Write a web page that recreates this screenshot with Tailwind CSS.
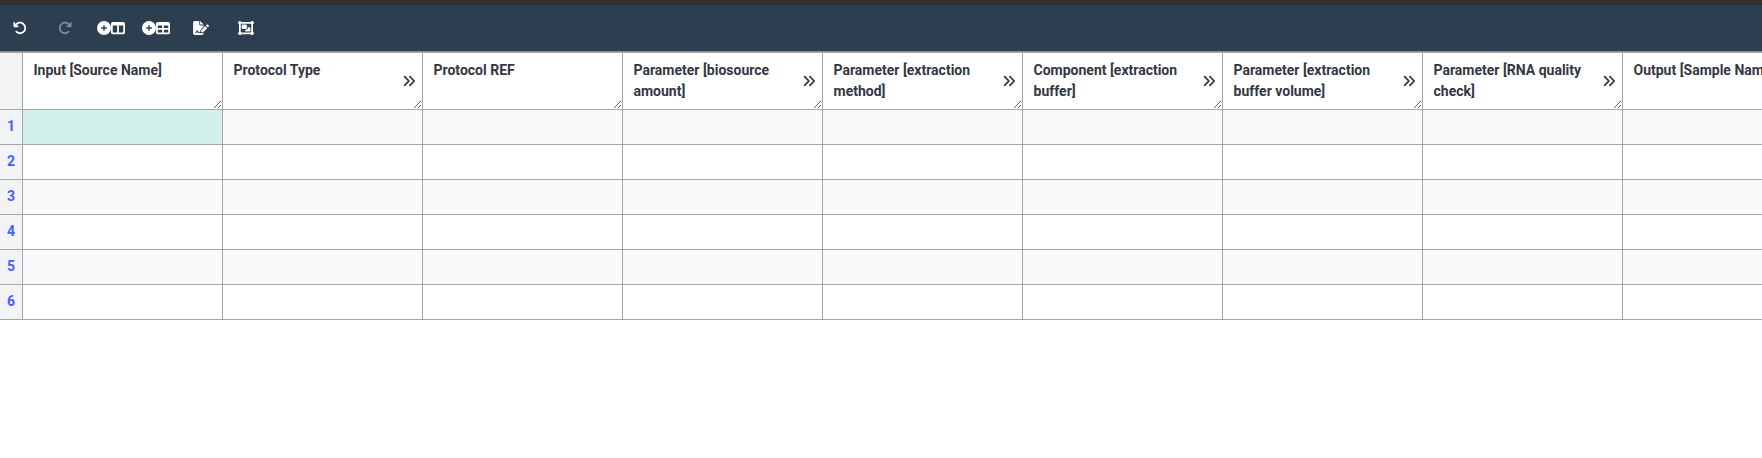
<!DOCTYPE html>
<html lang="en">
<head>
<meta charset="utf-8">
<title>Annotation table</title>
<script src="https://cdn.jsdelivr.net/npm/@tailwindcss/browser@4"></script>
</head>
<body class="h-screen overflow-hidden bg-white font-['Roboto',sans-serif] text-sm text-[#333742]">
<svg class="hidden">
  <symbol id="undo" viewBox="0 0 512 512"><path d="M125.7 160H176c17.7 0 32 14.3 32 32s-14.3 32-32 32H48c-17.7 0-32-14.3-32-32V64c0-17.7 14.3-32 32-32s32 14.3 32 32v51.2L97.6 97.6c87.5-87.5 229.3-87.5 316.8 0s87.5 229.3 0 316.8s-229.3 87.5-316.8 0c-12.5-12.5-12.5-32.8 0-45.3s32.8-12.5 45.3 0c62.5 62.5 163.8 62.5 226.3 0s62.5-163.8 0-226.3s-163.8-62.5-226.3 0L125.7 160z"/></symbol>
  <symbol id="plus" viewBox="0 0 512 512"><path d="M256 512A256 256 0 1 0 256 0a256 256 0 1 0 0 512zM232 344V280H168c-13.3 0-24-10.7-24-24s10.7-24 24-24h64V168c0-13.3 10.7-24 24-24s24 10.7 24 24v64h64c13.3 0 24 10.7 24 24s-10.7 24-24 24H280v64c0 13.3-10.7 24-24 24s-24-10.7-24-24z"/></symbol>
  <symbol id="columns" viewBox="0 0 512 512"><path d="M0 96C0 60.7 28.7 32 64 32H448c35.3 0 64 28.7 64 64V416c0 35.3-28.7 64-64 64H64c-35.3 0-64-28.7-64-64V96zm64 64V416H224V160H64zm384 0H288V416H448V160z"/></symbol>
  <symbol id="table" viewBox="0 0 512 512"><path d="M64 256V160H224v96H64zm0 64H224v96H64V320zm224 96V320H448v96H288zM448 256H288V160H448v96zM64 32C28.7 32 0 60.7 0 96V416c0 35.3 28.7 64 64 64H448c35.3 0 64-28.7 64-64V96c0-35.3-28.7-64-64-64H64z"/></symbol>
  <symbol id="sign" viewBox="0 0 576 512"><path d="M64 0C28.7 0 0 28.7 0 64V448c0 35.3 28.7 64 64 64H320c35.3 0 64-28.7 64-64V428.7c-2.7 1.1-5.4 2-8.2 2.7l-60.1 15c-3 .7-6 1.2-9 1.4c-.9 .1-1.8 .2-2.7 .2H240c-6.1 0-11.6-3.4-14.3-8.8l-8.8-17.7c-1.7-3.4-5.1-5.5-8.8-5.5s-7.2 2.1-8.8 5.5l-8.8 17.7c-2.9 5.9-9.2 9.4-15.7 8.8s-12.1-5.1-13.9-11.3L144 381l-9.8 32.8c-6.1 20.3-24.8 34.2-46 34.2H80c-8.8 0-16-7.2-16-16s7.2-16 16-16h8.2c7.1 0 13.3-4.6 15.3-11.4l14.9-49.5c3.4-11.3 13.8-19.1 25.6-19.1s22.2 7.7 25.6 19.1l11.6 38.6c7.4-6.2 16.8-9.7 26.8-9.7c15.9 0 30.4 9 37.5 23.2l4.4 8.8h8.9c-3.1-8.8-3.7-18.4-1.4-27.8l15-60.1c2.8-11.3 8.6-21.5 16.8-29.7L384 203.6V160H256c-17.7 0-32-14.3-32-32V0H64zM256 0V128H384L256 0zM549.8 139.7c-15.6-15.6-40.9-15.6-56.6 0l-29.4 29.4 71 71 29.4-29.4c15.6-15.6 15.6-40.9 0-56.6l-14.4-14.4zM311.9 321c-4.1 4.1-7 9.2-8.4 14.9l-15 60.1c-1.4 5.5 .2 11.2 4.2 15.2s9.7 5.6 15.2 4.2l60.1-15c5.6-1.4 10.8-4.3 14.9-8.4L512.1 262.7l-71-71L311.9 321z"/></symbol>
  <symbol id="group" viewBox="0 0 576 512"><path fill-rule="evenodd" d="M32 119.4V392.6c-19 11-32 31.700-32 55.400 0 35.300 28.700 64 64 64 23.700 0 44.400-12.900 55.400-32H456.600c11.100 19.100 31.700 32 55.400 32 35.300 0 64-28.700 64-64 0-23.700-12.900-44.400-32-55.400V119.400c19.100-11.100 32-31.700 32-55.400 0-35.300-28.700-64-64-64-23.700 0-44.400 12.900-55.400 32H119.400C108.400 12.900 87.700 0 64 0 28.700 0 0 28.700 0 64c0 23.700 13 44.400 32 55.400zM119.400 96H456.600c5.600 9.700 13.700 17.800 23.400 23.400V392.600c-9.700 5.600-17.800 13.700-23.400 23.400H119.400c-5.600-9.700-13.700-17.800-23.400-23.400V119.400c9.700-5.600 17.800-13.700 23.400-23.400z"/><path d="M128 160c0-17.700 14.300-32 32-32H288c17.700 0 32 14.300 32 32v96c0 17.700-14.300 32-32 32H160c-17.700 0-32-14.300-32-32V160zM256 320h32c35.300 0 64-28.700 64-64V224h64c17.700 0 32 14.300 32 32v96c0 17.700-14.300 32-32 32H288c-17.700 0-32-14.300-32-32V320z"/></symbol>
  <symbol id="chevs" viewBox="0 0 512 512"><path d="M470.600 278.600c12.500-12.500 12.500-32.800 0-45.300l-160-160c-12.500-12.500-32.800-12.500-45.300 0s-12.500 32.800 0 45.300L402.700 256 265.400 393.400c-12.500 12.500-12.500 32.800 0 45.300s32.800 12.500 45.300 0l160-160zm-352 160l160-160c12.500-12.500 12.500-32.800 0-45.300l-160-160c-12.500-12.500-32.800-12.500-45.300 0s-12.500 32.800 0 45.300L210.700 256 73.400 393.400c-12.500 12.500-12.500 32.800 0 45.300s32.800 12.500 45.300 0z"/></symbol>
</svg>
<div class="h-[5px] bg-[#303030]"></div>
<nav class="flex h-[46px] items-center bg-[#2d3e50] pl-[13px] pb-[1px] text-white fill-current">
  <svg class="size-3.5"><use href="#undo"/></svg>
  <svg class="ml-[31px] size-3.5 -scale-x-100 opacity-40"><use href="#undo"/></svg>
  <span class="ml-[24.5px] flex"><svg class="size-3.5"><use href="#plus"/></svg><svg class="size-3.5"><use href="#columns"/></svg></span>
  <span class="ml-[17px] flex"><svg class="size-3.5"><use href="#plus"/></svg><svg class="size-3.5"><use href="#table"/></svg></span>
  <svg class="ml-[23px] h-3.5 w-4"><use href="#sign"/></svg>
  <svg class="ml-[29px] h-3.5 w-4"><use href="#group"/></svg>
</nav>
<div class="h-px bg-[#8f8c91]"></div>
<main id="grid" class="grid w-[1823px] grid-cols-[23px_repeat(9,200px)]"></main>
<script>
  const headers = [
    ['Input [Source Name]', 0], ['Protocol Type', 1], ['Protocol REF', 0],
    ['Parameter [biosource amount]', 1], ['Parameter [extraction method]', 1],
    ['Component [extraction buffer]', 1], ['Parameter [extraction buffer volume]', 1],
    ['Parameter [RNA quality check]', 1], ['Output [Sample Name]', 0]
  ];
  const line = 'border-r border-b border-[#a6a6a6] ';
  let html = `<div class="${line} border-t h-[58px] bg-[#f2f3f5]"></div>`;
  for (const [name, more] of headers) {
    html += `<div class="${line} border-t h-[58px]"><div class="flex h-full resize-x items-center overflow-hidden pl-[10.5px] pr-1.5">
      <div class="h-[42px] flex-1 font-bold leading-[21px]">${name}</div>
      ${more ? '<svg class="ml-2 size-3.5 shrink-0 fill-current"><use href="#chevs"/></svg>' : ''}</div></div>`;
  }
  for (let r = 1; r <= 6; r++) {
    html += `<div class="${line} flex h-[35px] items-center justify-center bg-[#f2f3f5] pb-[3px] font-bold text-[#4a5cff]">${r}</div>`;
    for (let c = 0; c < 9; c++) {
      const bg = r === 1 && c === 0 ? 'bg-[#d2f1ec]' : r % 2 ? 'bg-[#f9fafc]' : 'bg-white';
      html += `<div class="${line} h-[35px] ${bg}"></div>`;
    }
  }
  document.getElementById('grid').innerHTML = html;
</script>
</body>
</html>
